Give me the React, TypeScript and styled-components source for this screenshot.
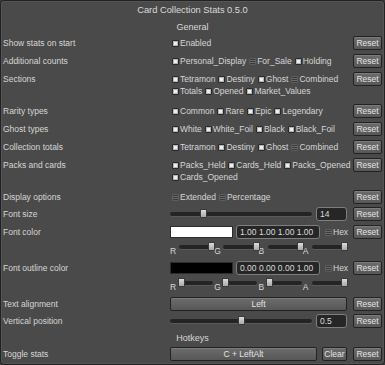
import React from 'react';
import styled, { createGlobalStyle } from 'styled-components';

const GlobalStyle = createGlobalStyle`
  html, body {
    margin: 0;
    padding: 0;
    background: #3a3a3a;
  }
  * {
    box-sizing: border-box;
  }
`;

const Window = styled.div`
  width: 385px;
  height: 365px;
  padding: 0 3px;
  background: #4a4a4a;
  border-radius: 4px;
  box-shadow: inset 0 0 0 1px #222222, inset 0 0 0 2px #555555;
  font-family: 'Liberation Sans', Arial, sans-serif;
  font-size: 8.5px;
  color: #d6d6d6;
  overflow: hidden;
`;

const Title = styled.div`
  height: 19px;
  display: flex;
  align-items: center;
  justify-content: center;
  font-size: 9.3px;
  color: #dadada;
`;

const Header = styled.div<{ $h: number }>`
  height: ${(p) => p.$h}px;
  display: flex;
  align-items: center;
  justify-content: center;
  font-size: 9px;
  color: #d8d8d8;
`;

const Row = styled.div<{ $h: number; $top?: boolean }>`
  height: ${(p) => p.$h}px;
  display: flex;
  align-items: ${(p) => (p.$top ? 'flex-start' : 'center')};
`;

const Label = styled.div<{ $top?: boolean }>`
  width: 167px;
  flex: none;
  white-space: nowrap;
  line-height: ${(p) => (p.$top ? '18px' : 'normal')};
`;

const Controls = styled.div<{ $top?: boolean }>`
  width: 177px;
  flex: none;
  display: flex;
  flex-direction: ${(p) => (p.$top ? 'column' : 'row')};
  align-items: ${(p) => (p.$top ? 'flex-start' : 'center')};
  padding-top: ${(p) => (p.$top ? 3 : 0)}px;
`;

const ToggleLine = styled.div`
  display: flex;
  column-gap: 3px;
  padding-left: 2px;
  white-space: nowrap;
`;

const ToggleItem = styled.label`
  display: flex;
  align-items: center;
  height: 12px;
  gap: 1px;
  white-space: nowrap;
`;

const Box = styled.span<{ $checked: boolean }>`
  width: 7px;
  height: 7px;
  border-radius: 1px;
  flex: none;
  border: 1px solid ${(p) => (p.$checked ? '#2a2a2a' : '#5e5e5e')};
  background: ${(p) =>
    p.$checked
      ? 'radial-gradient(circle at 50% 50%, #eeeeee 0 1.5px, #b4b4b4 2px)'
      : 'repeating-linear-gradient(#3a3a3a 0 1px, #6a6a6a 1px 2px)'};
`;

const Button = styled.button<{ $w: number }>`
  width: ${(p) => p.$w}px;
  height: 14px;
  flex: none;
  padding: 0;
  border: 1px solid #222222;
  border-radius: 2px;
  background: linear-gradient(#6c6c6c, #575757);
  box-shadow: inset 0 1px 0 #7c7c7c;
  color: #e4e4e4;
  font-family: inherit;
  font-size: 8.5px;
  line-height: 12px;
  text-align: center;
`;

const ResetButton = styled(Button)<{ $mt?: number }>`
  margin-left: 6px;
  margin-top: ${(p) => p.$mt ?? 0}px;
`;

const ClearButton = styled(Button)`
  margin-left: 5px;
`;

const SliderTrack = styled.div<{ $w: number }>`
  position: relative;
  width: ${(p) => p.$w}px;
  height: 4px;
  flex: none;
  border-radius: 2px;
  background: #242424;
  box-shadow: 0 1px 0 #5a5a5a;
`;

const Thumb = styled.span`
  position: absolute;
  top: -3px;
  width: 7px;
  height: 9px;
  margin-left: -3px;
  border-radius: 1px;
  border: 1px solid #3a3a3a;
  background: linear-gradient(#dcdcdc, #a8a8a8);
`;

const Field = styled.div<{ $w: number; $ml: number }>`
  width: ${(p) => p.$w}px;
  height: 14px;
  flex: none;
  margin-left: ${(p) => p.$ml}px;
  padding-left: 3px;
  border: 1px solid #7e7e7e;
  border-radius: 3px;
  background: #262626;
  color: #dcdcdc;
  line-height: 12px;
  white-space: nowrap;
`;

const Swatch = styled.div<{ $color: string }>`
  width: 63px;
  height: 12px;
  flex: none;
  background: ${(p) => p.$color};
  border: 1px solid #2c2c2c;
`;

const ChannelRow = styled.div`
  height: 16px;
  display: flex;
  align-items: flex-start;
  padding-left: 167px;
`;

const Channels = styled.div`
  width: 177px;
  display: grid;
  grid-template-columns: repeat(4, 1fr);
`;

const Channel = styled.div`
  display: flex;
  align-items: flex-start;
  padding-top: 3px;
`;

const ChannelLetter = styled.span`
  width: 9px;
  flex: none;
  margin-top: 1px;
  line-height: 10px;
`;

const HexToggle = styled.div`
  margin-left: 5px;
`;

const Slider = ({ width, value }: { width: number; value: number }) => (
  <SliderTrack $w={width}>
    <Thumb style={{ left: `${value * 100}%` }} />
  </SliderTrack>
);

const Toggle = ({ text, checked }: { text: string; checked: boolean }) => (
  <ToggleItem>
    <Box $checked={checked} />
    {text}
  </ToggleItem>
);

type Opt = [string, boolean];

const ToggleRow = ({ label, lines }: { label: string; lines: Opt[][] }) => {
  const tall = lines.length > 1;
  return (
    <Row $h={tall ? 32 : 18} $top={tall}>
      <Label $top={tall}>{label}</Label>
      <Controls $top={tall}>
        {lines.map((line, i) => (
          <ToggleLine key={i}>
            {line.map(([t, c]) => (
              <Toggle key={t} text={t} checked={c} />
            ))}
          </ToggleLine>
        ))}
      </Controls>
      <ResetButton $w={29} $mt={tall ? 2 : 0}>Reset</ResetButton>
    </Row>
  );
};

const ChannelSliders = ({ values }: { values: number[] }) => (
  <ChannelRow>
    <Channels>
      {['R', 'G', 'B', 'A'].map((c, i) => (
        <Channel key={c}>
          <ChannelLetter>{c}</ChannelLetter>
          <Slider width={34} value={values[i] * 0.9 + 0.05} />
        </Channel>
      ))}
    </Channels>
  </ChannelRow>
);

const ColorRow = ({ label, color, text }: { label: string; color: string; text: string }) => (
  <Row $h={20}>
    <Label>{label}</Label>
    <Controls>
      <Swatch $color={color} />
      <Field $w={84} $ml={3}>{text}</Field>
      <HexToggle>
        <Toggle text="Hex" checked={false} />
      </HexToggle>
    </Controls>
    <ResetButton $w={29}>Reset</ResetButton>
  </Row>
);

export default function App() {
  return (
    <>
      <GlobalStyle />
      <Window>
        <Title>Card Collection Stats 0.5.0</Title>
        <Header $h={15}>General</Header>
        <ToggleRow label="Show stats on start" lines={[[['Enabled', true]]]} />
        <ToggleRow
          label="Additional counts"
          lines={[
            [
              ['Personal_Display', true],
              ['For_Sale', false],
              ['Holding', true],
            ],
          ]}
        />
        <ToggleRow
          label="Sections"
          lines={[
            [
              ['Tetramon', true],
              ['Destiny', true],
              ['Ghost', true],
              ['Combined', false],
            ],
            [
              ['Totals', true],
              ['Opened', true],
              ['Market_Values', true],
            ],
          ]}
        />
        <ToggleRow
          label="Rarity types"
          lines={[
            [
              ['Common', true],
              ['Rare', true],
              ['Epic', true],
              ['Legendary', true],
            ],
          ]}
        />
        <ToggleRow
          label="Ghost types"
          lines={[
            [
              ['White', true],
              ['White_Foil', true],
              ['Black', true],
              ['Black_Foil', true],
            ],
          ]}
        />
        <ToggleRow
          label="Collection totals"
          lines={[
            [
              ['Tetramon', true],
              ['Destiny', true],
              ['Ghost', true],
              ['Combined', false],
            ],
          ]}
        />
        <ToggleRow
          label="Packs and cards"
          lines={[
            [
              ['Packs_Held', true],
              ['Cards_Held', true],
              ['Packs_Opened', true],
            ],
            [['Cards_Opened', true]],
          ]}
        />
        <ToggleRow
          label="Display options"
          lines={[
            [
              ['Extended', false],
              ['Percentage', false],
            ],
          ]}
        />
        <Row $h={16}>
          <Label>Font size</Label>
          <Controls>
            <Slider width={142} value={0.23} />
            <Field $w={31} $ml={4}>14</Field>
          </Controls>
          <ResetButton $w={29}>Reset</ResetButton>
        </Row>
        <ColorRow label="Font color" color="#ffffff" text="1.00 1.00 1.00 1.00" />
        <ChannelSliders values={[1, 1, 1, 1]} />
        <ColorRow label="Font outline color" color="#000000" text="0.00 0.00 0.00 1.00" />
        <ChannelSliders values={[0, 0, 0, 1]} />
        <Row $h={20}>
          <Label>Text alignment</Label>
          <Controls>
            <Button $w={177}>Left</Button>
          </Controls>
          <ResetButton $w={29}>Reset</ResetButton>
        </Row>
        <Row $h={14}>
          <Label>Vertical position</Label>
          <Controls>
            <Slider width={142} value={0.5} />
            <Field $w={31} $ml={4}>0.5</Field>
          </Controls>
          <ResetButton $w={29}>Reset</ResetButton>
        </Row>
        <Header $h={19}>Hotkeys</Header>
        <Row $h={14}>
          <Label>Toggle stats</Label>
          <Controls>
            <Button $w={147}>C + LeftAlt</Button>
            <ClearButton $w={25}>Clear</ClearButton>
          </Controls>
          <ResetButton $w={29}>Reset</ResetButton>
        </Row>
      </Window>
    </>
  );
}
